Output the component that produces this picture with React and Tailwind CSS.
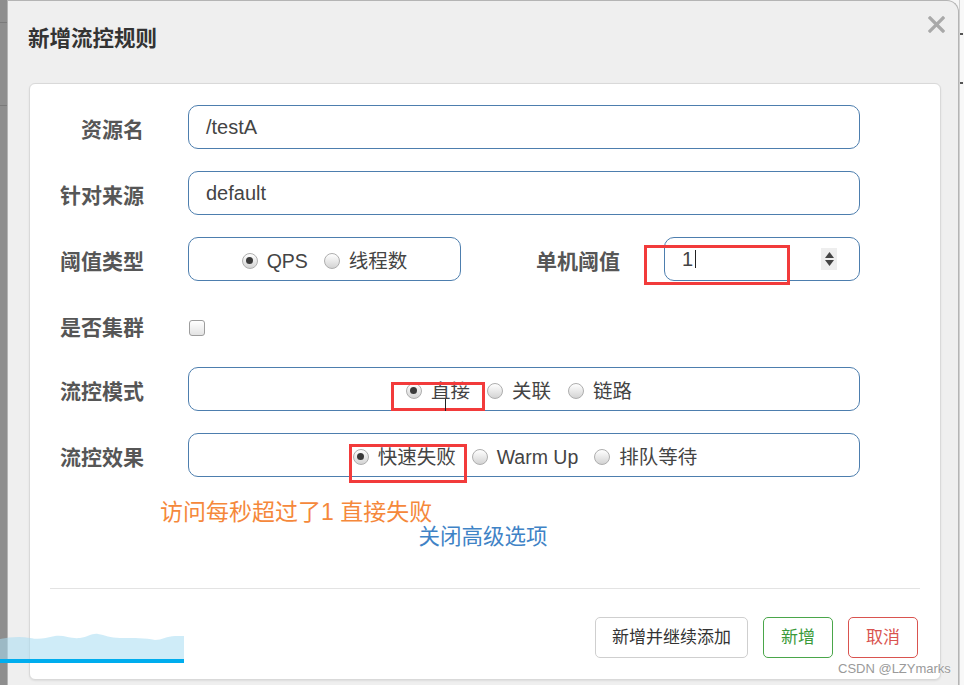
import React from "react";

const Radio = ({ checked }) => (
  <span className="inline-flex w-[16px] h-[16px] shrink-0 items-center justify-center rounded-full border border-[#aeaeae] bg-[linear-gradient(180deg,#ffffff,#d3d3d3)]">
    {checked && <span className="block w-[7px] h-[7px] rounded-full bg-[#3a3a3a]" />}
  </span>
);

const RadioItem = ({ checked, label, className = "" }) => (
  <span className={"inline-flex items-center mt-[3px] " + className}>
    <Radio checked={checked} />
    <span className="ml-[9px] mt-[3px] text-[19.5px] text-[#444] leading-none">{label}</span>
  </span>
);

const Label = ({ children, className = "w-[114px]" }) => (
  <div className={"shrink-0 text-right text-[21px] font-bold text-[#565656] leading-none pt-[14px] " + className}>
    {children}
  </div>
);

const boxCls =
  "h-[44px] rounded-[10px] border-[1.5px] border-[#4d7eae] bg-white flex items-center";

export default function App() {
  return (
    <div className="relative w-[964px] h-[685px] overflow-hidden flex bg-[#f6f6f6] font-['Liberation_Sans','Noto_Sans_CJK_SC',sans-serif]">
      {/* left strip */}
      <div className="w-[7px] shrink-0 bg-[#8e8e8e] flex flex-col">
        <div className="h-[22px]" />
        <div className="h-[1px] bg-[#7a7a7a]" />
        <div className="h-[82px]" />
        <div className="h-[1px] bg-[#7a7a7a]" />
      </div>

      {/* modal */}
      <div className="w-[952px] shrink-0 bg-[#efefef] border border-b-0 border-[#b4b4b4] rounded-tr-[12px] flex flex-col">
        <div className="h-[82px] flex justify-between items-start">
          <div className="pl-[20px] pt-[25px] text-[21.5px] leading-[26px] font-bold text-[#333]">
            新增流控规则
          </div>
          <svg className="mt-[15px] mr-[13px]" width="17" height="17" viewBox="0 0 17 17">
            <path d="M2 2 L15 15 M15 2 L2 15" stroke="#a9a9a9" strokeWidth="3.2" strokeLinecap="square" />
          </svg>
        </div>

        <div className="ml-[21px] w-[912px] h-[597px] rounded-[6px] border border-[#d9d9d9] bg-white flex flex-col shadow-[0_1px_2px_rgba(0,0,0,0.08)]">
          {/* row 1 */}
          <div className="flex mt-[21px]">
            <Label>资源名</Label>
            <div className={boxCls + " ml-[44px] w-[672px] pl-[17px] text-[20px] text-[#444]"}>/testA</div>
          </div>
          {/* row 2 */}
          <div className="flex mt-[22px]">
            <Label>针对来源</Label>
            <div className={boxCls + " ml-[44px] w-[672px] pl-[17px] text-[20px] text-[#444]"}>default</div>
          </div>
          {/* row 3 */}
          <div className="flex mt-[22px]">
            <Label>阈值类型</Label>
            <div className={boxCls + " ml-[44px] w-[273px] justify-center"}>
              <RadioItem checked label="QPS" />
              <RadioItem label="线程数" className="ml-[16px]" />
            </div>
            <Label className="ml-[73px] w-[86px]">单机阈值</Label>
            <div className={boxCls + " ml-[44px] w-[196px] pl-[17px] justify-between pr-[22px]"}>
              <span className="flex items-center text-[20px] text-[#444]">
                1<span className="ml-[2px] w-[1px] h-[18px] bg-[#222]" />
              </span>
              <span className="w-[16px] h-[22px] bg-[#eeeeee] flex flex-col items-center justify-center gap-[2px]">
                <svg width="9" height="6" viewBox="0 0 9 6"><path d="M0 6 L4.5 0 L9 6 Z" fill="#444" /></svg>
                <svg width="9" height="6" viewBox="0 0 9 6"><path d="M0 0 L4.5 6 L9 0 Z" fill="#444" /></svg>
              </span>
            </div>
          </div>
          {/* row 4 */}
          <div className="flex mt-[22px] h-[44px]">
            <Label>是否集群</Label>
            <span className="ml-[45px] mt-[17px] w-[16px] h-[16px] rounded-[3px] border border-[#9d9d9d] bg-[linear-gradient(180deg,#ffffff,#e3e3e3)]" />
          </div>
          {/* row 5 */}
          <div className="flex mt-[20px]">
            <Label>流控模式</Label>
            <div className={boxCls + " ml-[44px] w-[672px] justify-center pr-[10px]"}>
              <RadioItem checked label="直接" />
              <RadioItem label="关联" className="ml-[17px]" />
              <RadioItem label="链路" className="ml-[17px]" />
            </div>
          </div>
          {/* row 6 */}
          <div className="flex mt-[22px]">
            <Label>流控效果</Label>
            <div className={boxCls + " ml-[44px] w-[672px] justify-center pl-[2px]"}>
              <RadioItem checked label="快速失败" />
              <RadioItem label="Warm Up" className="ml-[16px]" />
              <RadioItem label="排队等待" className="ml-[16px]" />
            </div>
          </div>

          <div className="mt-[21px] ml-[130px] h-[28px] leading-[28px] text-[23px] text-[#f5883b]">
            访问每秒超过了1 直接失败
          </div>
          <div className="text-center pr-[4px] h-[22px] leading-[22px] text-[21.5px] text-[#3f83c6]">关闭高级选项</div>

          <div className="mt-[40px] mx-[20px] h-[1px] bg-[#e3e3e3]" />

          <div className="mt-[28px] mr-[22px] flex justify-end gap-[15px]">
            <div className="w-[153px] h-[41px] rounded-[5px] border border-[#cfcfcf] bg-white flex items-center justify-center text-[17px] text-[#333]">
              新增并继续添加
            </div>
            <div className="w-[70px] h-[41px] rounded-[5px] border border-[#4aa64a] bg-white flex items-center justify-center text-[17px] text-[#3a9a3a]">
              新增
            </div>
            <div className="w-[70px] h-[41px] rounded-[5px] border border-[#d9534f] bg-white flex items-center justify-center text-[17px] text-[#d9534f]">
              取消
            </div>
          </div>
        </div>
      </div>

      {/* right strip */}
      <div className="flex-1 bg-[#f8f8f8] border-l border-[#d0d0d0] flex flex-col">
        <div className="h-[33px]" />
        <div className="h-[2px] w-[3px] bg-[#555]" />
        <div className="h-[47px]" />
        <div className="h-[2px] w-[3px] bg-[#555]" />
      </div>

      {/* annotation red boxes */}
      <div className="absolute left-[644px] top-[245px] w-[146px] h-[40px] border-[3px] border-[#f23b3b]" />
      <div className="absolute left-[391px] top-[382px] w-[94px] h-[29px] border-[3px] border-[#f23b3b]" />
      <div className="absolute left-[349px] top-[444px] w-[118px] h-[39px] border-[3px] border-[#f23b3b]" />
      {/* mouse I-beam */}
      <div className="absolute left-[445px] top-[399px] w-[1px] h-[12px] bg-[#222]" />

      {/* wave */}
      <svg className="absolute left-0 top-[630px]" width="184" height="34" viewBox="0 0 184 34">
        <path
          d="M0 9 C10 7 20 6 30 8 C40 10 45 8 55 6 C65 5 70 9 80 8 C88 7 92 3 98 4 C105 5 110 8 120 8 C135 8 145 8 155 10 C162 10 167 6 175 6 L184 6 L184 29 L0 29 Z"
          fill="#a8dcf3"
          fillOpacity="0.55"
        />
        <rect x="0" y="29" width="184" height="4" fill="#00adee" />
      </svg>

      {/* watermark */}
      <div className="absolute left-[838px] top-[660px] text-[13px] leading-[18px] text-[#9a9a9a] [text-shadow:0_0_2px_#fff]">
        CSDN @LZYmarks
      </div>
    </div>
  );
}
